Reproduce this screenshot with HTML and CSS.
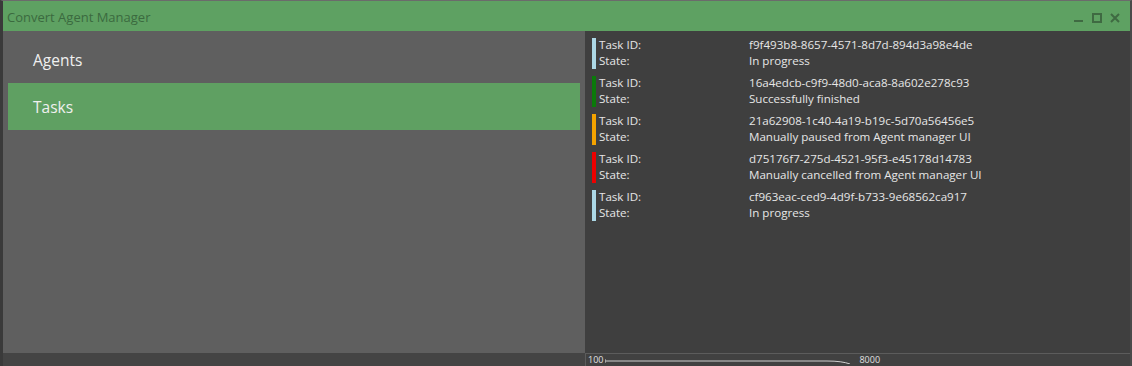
FILE: index.html
```html
<!DOCTYPE html>
<html>
<head>
<meta charset="utf-8">
<link rel="stylesheet" href="styles.css">
</head>
<body>
<div class="window">
  <div class="titlebar">
    <span class="title">Convert Agent Manager</span>
    <div class="controls">
      <svg class="ctl" width="10" height="10" viewBox="0 0 10 10"><rect x="0" y="7" width="9" height="2" fill="#3f6a42"/></svg>
      <svg class="ctl" width="10" height="10" viewBox="0 0 10 10"><rect x="1" y="1" width="8" height="8" fill="none" stroke="#3f6a42" stroke-width="2"/></svg>
      <svg class="ctl" width="10" height="10" viewBox="0 0 10 10"><path d="M1 1 L9 9 M9 1 L1 9" stroke="#3f6a42" stroke-width="2"/></svg>
    </div>
  </div>
  <div class="content">
    <nav class="nav">
      <div class="nav-item">Agents</div>
      <div class="nav-item active">Tasks</div>
    </nav>
    <section class="tasks">
      <div class="task">
        <div class="bar blue"></div>
        <div class="grid">
          <span>Task ID:</span><span>f9f493b8-8657-4571-8d7d-894d3a98e4de</span>
          <span>State:</span><span>In progress</span>
        </div>
      </div>
      <div class="task">
        <div class="bar green"></div>
        <div class="grid">
          <span>Task ID:</span><span>16a4edcb-c9f9-48d0-aca8-8a602e278c93</span>
          <span>State:</span><span>Successfully finished</span>
        </div>
      </div>
      <div class="task">
        <div class="bar orange"></div>
        <div class="grid">
          <span>Task ID:</span><span>21a62908-1c40-4a19-b19c-5d70a56456e5</span>
          <span>State:</span><span>Manually paused from Agent manager UI</span>
        </div>
      </div>
      <div class="task">
        <div class="bar red"></div>
        <div class="grid">
          <span>Task ID:</span><span>d75176f7-275d-4521-95f3-e45178d14783</span>
          <span>State:</span><span>Manually cancelled from Agent manager UI</span>
        </div>
      </div>
      <div class="task">
        <div class="bar blue"></div>
        <div class="grid">
          <span>Task ID:</span><span>cf963eac-ced9-4d9f-b733-9e68562ca917</span>
          <span>State:</span><span>In progress</span>
        </div>
      </div>
    </section>
  </div>
  <div class="footer">
    <div class="footer-left"></div>
    <div class="footer-right">
      <span class="num">100</span>
      <svg class="slider" width="252" height="8" viewBox="0 0 252 8"><path d="M0 5 H222 Q237 5 245 8" fill="none" stroke="#cfcfcf" stroke-width="1"/><path d="M0 3 V7" stroke="#cfcfcf"/></svg>
      <span class="num">8000</span>
    </div>
  </div>
</div>
</body>
</html>
```
FILE: styles.css
```css
html, body {
  margin: 0;
  padding: 0;
  background: #404040;
}
body {
  font-family: "Open Sans", "Noto Sans", "Liberation Sans", sans-serif;
}
.window {
  width: 1132px;
  height: 366px;
  display: flex;
  flex-direction: column;
  box-sizing: border-box;
  border-left: 3px solid #3a3a3a;
  border-right: 2px solid #4a4a4a;
  border-top: 1px solid #6b6b6b;
}
.titlebar {
  height: 30px;
  flex: none;
  background: #5ea162;
  display: flex;
  align-items: center;
  justify-content: space-between;
  padding: 0 10px 0 4px;
}
.title {
  font-size: 13px;
  color: #3b6a3f;
  margin-top: 2px;
}
.controls {
  display: flex;
  gap: 8px;
  align-items: center;
  margin-top: 3px;
}
.content {
  flex: 1;
  display: flex;
  min-height: 0;
}
.nav {
  width: 582px;
  flex: none;
  background: #5f5f5f;
  padding: 5px 5px 0 5px;
  box-sizing: border-box;
}
.nav-item {
  height: 47px;
  display: flex;
  align-items: center;
  padding-left: 25px;
  font-size: 15.5px;
  color: #f0f0f0;
}
.nav-item.active {
  background: #5fa062;
}
.tasks {
  flex: 1;
  background: #3f3f3f;
  padding: 6px 0 0 7px;
  display: flex;
  flex-direction: column;
  gap: 6px;
}
.task {
  display: flex;
  height: 32px;
}
.bar {
  width: 4px;
  height: 31px;
  margin-top: 1px;
  margin-right: 3px;
  flex: none;
}
.bar.blue { background: #acd8e6; }
.bar.green { background: #0a7a0a; }
.bar.orange { background: #f4a300; }
.bar.red { background: #ee0000; }
.grid {
  display: grid;
  grid-template-columns: 150px auto;
  grid-auto-rows: 16px;
  font-size: 11.6px;
  color: #e6e6e6;
  line-height: 16px;
}
.footer {
  height: 13px;
  flex: none;
  display: flex;
  background: #414141;
}
.footer-left {
  width: 582px;
  flex: none;
  background: #444444;
}
.footer-right {
  flex: 1;
  border-top: 1px solid #5c5c5c;
  border-left: 1px solid #5c5c5c;
  display: flex;
  align-items: center;
  padding-left: 2px;
  font-size: 9px;
  color: #e0e0e0;
  line-height: 12px;
}
.num {
  display: block;
}
.slider {
  margin-left: 2px;
  margin-right: 2px;
}
```
